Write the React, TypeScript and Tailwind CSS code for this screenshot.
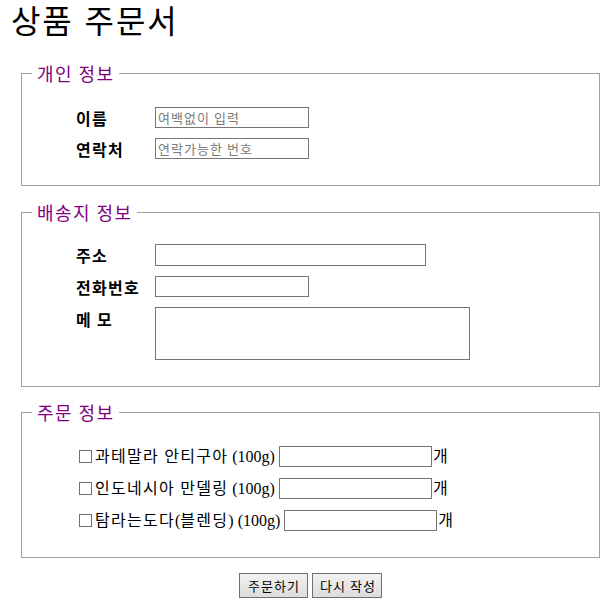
import React from "react";

const KR = "font-['Noto_Sans_CJK_KR',sans-serif]";

function TextInput({ w, placeholder }: { w: string; placeholder?: string }) {
  return (
    <input
      type="text"
      placeholder={placeholder}
      className={`${w} h-[21px] border border-[#767676] bg-white px-[2px] text-[13px] leading-[17px] tracking-[0.08em] text-black placeholder:text-[#7a7a7a] outline-none ${KR}`}
    />
  );
}

function Legend({ children }: { children: React.ReactNode }) {
  return (
    <legend className={`px-[5px] text-[18px] leading-[24px] tracking-[0.08em] text-[#800080] ${KR}`}>{children}</legend>
  );
}

function Label({ children }: { children: React.ReactNode }) {
  return (
    <div className={`w-[79px] text-[16px] leading-[20px] font-bold tracking-[0.08em] text-black ${KR}`}>{children}</div>
  );
}

function K({ children }: { children: React.ReactNode }) {
  return <span className="tracking-[0.08em]">{children}</span>;
}

function OrderRow({ name, inputClass }: { name: React.ReactNode; inputClass: string }) {
  return (
    <div className="flex items-center h-[21px] text-[16px] leading-[20px] text-black">
      <span className="inline-block w-[13px] h-[13px] ml-[1px] mr-[3px] border border-[#707070] bg-white" />
      <span className="whitespace-pre">
        {name} (100g){" "}
      </span>
      <TextInput w={inputClass} />
      <span className="ml-[1px]">개</span>
    </div>
  );
}

export default function App() {
  return (
    <div className={`w-[616px] min-h-[608px] bg-white text-black font-['Liberation_Serif','Noto_Sans_CJK_KR',serif]`}>
      <h1 className="pl-[11px] pt-[2px] text-[32px] leading-[40px] tracking-[0.06em] font-normal font-['Liberation_Sans','Noto_Sans_CJK_KR',sans-serif]">
        상품 주문서
      </h1>
      <form className="ml-[21px] w-[579px] pt-[19px]">
        <fieldset className="border border-[#a0a0a0] px-[10px]">
          <Legend>개인 정보</Legend>
          <div className="pl-[44px] pt-[22px] pb-[26px] flex flex-col gap-[10px]">
            <div className="flex items-center h-[21px]">
              <Label>이름</Label>
              <TextInput w="w-[154px]" placeholder="여백없이 입력" />
            </div>
            <div className="flex items-center h-[21px]">
              <Label>연락처</Label>
              <TextInput w="w-[154px]" placeholder="연락가능한 번호" />
            </div>
          </div>
        </fieldset>

        <fieldset className="mt-[14px] border border-[#a0a0a0] px-[10px]">
          <Legend>배송지 정보</Legend>
          <div className="pl-[44px] pt-[20px] pb-[26px] flex flex-col">
            <div className="flex items-center h-[22px]">
              <Label>주소</Label>
              <input
                type="text"
                className="w-[271px] h-[22px] border border-[#767676] bg-white outline-none"
              />
            </div>
            <div className="flex items-center h-[21px] mt-[10px]">
              <Label>전화번호</Label>
              <TextInput w="w-[154px]" />
            </div>
            <div className="flex items-start mt-[10px]">
              <div className="pt-[2px]">
                <Label>메 모</Label>
              </div>
              <textarea className="w-[315px] h-[53px] border border-[#767676] bg-white outline-none resize-none" />
            </div>
          </div>
        </fieldset>

        <fieldset className="mt-[13px] border border-[#a0a0a0] px-[10px]">
          <Legend>주문 정보</Legend>
          <div className="pl-[46px] pt-[22px] pb-[26px] flex flex-col gap-[11px]">
            <OrderRow name={<K>과테말라 안티구아</K>} inputClass="w-[153px]" />
            <OrderRow name={<K>인도네시아 만델링</K>} inputClass="w-[153px]" />
            <OrderRow
              name={
                <>
                  <K>탐라는도다</K>(<K>블렌딩</K>)
                </>
              }
              inputClass="w-[153px]"
            />
          </div>
        </fieldset>

        <div className="flex justify-center gap-[4px] pt-[15px]">
          <button
            type="submit"
            className={`h-[25px] pl-[8px] pr-[7px] border border-[#707070] bg-gradient-to-b from-[#f2f2f2] to-[#dcdcdc] text-[13px] leading-[17px] tracking-[0.08em] text-black ${KR}`}
          >
            주문하기
          </button>
          <button
            type="reset"
            className={`h-[25px] pl-[7px] pr-[5px] border border-[#707070] bg-gradient-to-b from-[#f2f2f2] to-[#dcdcdc] text-[13px] leading-[17px] tracking-[0.08em] text-black ${KR}`}
          >
            다시 작성
          </button>
        </div>
      </form>
    </div>
  );
}
